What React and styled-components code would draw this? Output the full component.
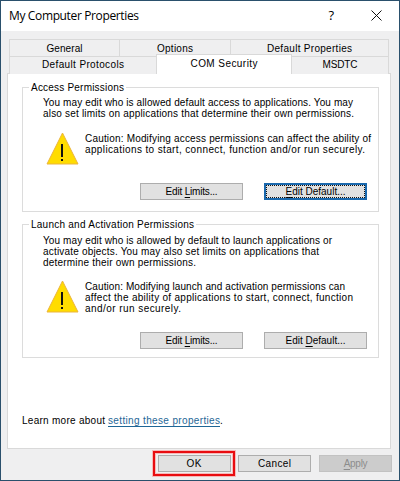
import React, { useLayoutEffect, useRef } from 'react';
import styled, { createGlobalStyle, css } from 'styled-components';

const Global = createGlobalStyle`
  * { box-sizing: border-box; }
  body { margin: 0; background: #fff; }
`;

const Dialog = styled.div`
  width: 400px;
  height: 481px;
  display: flex;
  flex-direction: column;
  background: #efeff0;
  border: 1px solid #2a506c;
  color: #000;
  font: 10px/11px 'Liberation Sans', Arial, sans-serif;
  overflow: hidden;
`;

const TitleBar = styled.header`
  display: flex;
  align-items: center;
  height: 30px;
  flex: none;
  padding: 0 17px 2px 8px;
  background: #fff;
`;

const Title = styled.h1`
  margin: 0;
  flex: 1;
  font: 12px/12px 'Open Sans', 'Noto Sans', sans-serif;
`;

const HelpMark = styled.span`
  font: 13px/16px 'Open Sans', 'Noto Sans', sans-serif;
  margin-right: 37px;
`;

const CloseIcon = styled.svg`
  display: block;
  width: 11px;
  height: 11px;
`;

const TabRow = styled.div`
  display: flex;
  align-items: flex-end;
  width: 380px;
  margin-left: 8px;
  flex: none;
  ${(p) => (p.$front
    ? css`height: 20px; margin-top: -3px; z-index: 1;`
    : css`height: 18px; margin-top: 8px;`)}
`;

const Tab = styled.div`
  width: ${(p) => p.$width}px;
  height: ${(p) => (p.$active ? 20 : 18)}px;
  padding-top: ${(p) => p.$top || 3}px;
  display: flex;
  justify-content: center;
  background: ${(p) => (p.$active ? '#fff' : '#efeff0')};
  border: 1px solid #d9d9d9;
  border-bottom: 0;
  border-left-width: ${(p) => (p.$joined ? 0 : 1)}px;
  border-right-width: ${(p) => (p.$open ? 0 : 1)}px;
`;

const Panel = styled.main`
  width: 384px;
  height: 376px;
  flex: none;
  margin: -1px 0 0 6px;
  padding: 13px 11px 0 14px;
  display: flex;
  flex-direction: column;
  background: #fff;
  border: 1px solid #d9d9d9;
`;

const Group = styled.section`
  width: 357px;
  height: ${(p) => p.$height}px;
  flex: none;
  margin: 0 0 12px;
  display: flex;
  flex-direction: column;
  border: 1px solid #dcdcdc;
`;

const Legend = styled.div`
  width: max-content;
  height: 11px;
  flex: none;
  margin: -6px 0 0 6px;
  padding: 0 2px;
  background: #fff;
`;

const Paragraph = styled.div`
  margin: ${(p) => p.$gap}px 0 0 20px;
  flex: none;
`;

const Caution = styled.div`
  display: flex;
  align-items: flex-start;
  height: 44px;
  flex: none;
  margin: ${(p) => p.$gap}px 0 0 23px;
`;

const WarningIcon = styled.svg`
  width: 33px;
  height: 33px;
  flex: none;
  margin-top: -1px;
`;

const CautionText = styled.div`
  margin-left: 6px;
`;

const ButtonRow = styled.div`
  display: flex;
  justify-content: flex-end;
  gap: 21px;
  margin: auto 11px ${(p) => p.$bottom}px 0;
`;

const PushButton = styled.button`
  width: ${(p) => p.$width || 103}px;
  height: 17px;
  flex: none;
  display: flex;
  justify-content: center;
  padding: 2px 0 0;
  font: inherit;
  color: ${(p) => (p.disabled ? '#8c8c8c' : '#000')};
  background: ${(p) => (p.disabled ? '#cccccc' : '#e1e1e1')};
  border: 1px solid ${(p) => (p.disabled ? '#c2c2c2' : '#adadad')};
  ${(p) => p.$focused && css`
    padding-top: 1px;
    border: 2px solid #1a68ad;
    outline: 1px dotted #111;
    outline-offset: -3px;
  `}
`;

const Key = styled.span`
  text-decoration: underline;
  text-underline-offset: 2px;
  text-decoration-thickness: 1px;
`;

const LearnMore = styled.div`
  display: flex;
  margin: 45px 0 0 0;
`;

const Link = styled.a`
  height: 12px;
  margin-left: 3px;
  color: #1e6696;
  border-bottom: 1px solid #1e6696;
`;

const Footer = styled.footer`
  display: flex;
  align-items: center;
  height: 25px;
  flex: none;
  margin: 2px 0 0 152px;
`;

const Highlight = styled.div`
  display: flex;
  align-items: center;
  justify-content: center;
  width: 82px;
  height: 25px;
  margin-right: 3px;
  border: 2px solid #e80c10;
  box-shadow: 0 0 0 1px #f6b9b9, inset 0 0 0 1px #f6b9b9;
`;

const FooterButtons = styled.div`
  display: flex;
  gap: 8px;
`;

const FitText = styled.span`
  display: block;
  width: ${(p) => p.$width}px;
  height: 11px;
  white-space: nowrap;
`;

// Spreads the letters of one line so that it fills the given width.
function Line({ width, children }) {
  const inner = useRef(null);
  useLayoutEffect(() => {
    const el = inner.current;
    el.style.letterSpacing = '0px';
    const gaps = el.textContent.length - 1;
    const natural = el.getBoundingClientRect().width;
    el.style.letterSpacing = `${(width - natural) / gaps}px`;
  }, [width, children]);
  return <FitText $width={width}><span ref={inner}>{children}</span></FitText>;
}

function Warning() {
  return (
    <WarningIcon viewBox="0 0 33 33" aria-label="Warning">
      <path d="M16.500 1 L32 32 H1 Z" fill="#ffdc00" stroke="#ebb53c" strokeWidth="1" />
      <path d="M15 12 h2 v13 h-2z" fill="#111" />
      <rect x="15" y="27" width="2" height="2" fill="#111" />
    </WarningIcon>
  );
}

function EditLimits() {
  return <PushButton><Line width={52}>Edit <Key>L</Key>imits...</Line></PushButton>;
}

export default function App() {
  return (
    <Dialog>
      <Global />
      <TitleBar>
        <Title><Line width={130}>My Computer Properties</Line></Title>
        <HelpMark>?</HelpMark>
        <CloseIcon viewBox="0 0 11 11"><path d="M.5.5l10 10M10.500.5l-10 10" stroke="#111" fill="none" /></CloseIcon>
      </TitleBar>
      <TabRow>
        <Tab $width={111}><Line width={36}>General</Line></Tab>
        <Tab $width={111} $joined><Line width={36}>Options</Line></Tab>
        <Tab $width={158} $joined><Line width={85}>Default Properties</Line></Tab>
      </TabRow>
      <TabRow $front>
        <Tab $width={147} $top={2} $open><Line width={82}>Default Protocols</Line></Tab>
        <Tab $width={136} $active><Line width={67}>COM Security</Line></Tab>
        <Tab $width={97} $top={2} $joined><Line width={35}>MSDTC</Line></Tab>
      </TabRow>
      <Panel>
        <Group $height={125}>
          <Legend><Line width={93}>Access Permissions</Line></Legend>
          <Paragraph $gap={4}>
            <Line width={310}>You may edit who is allowed default access to applications. You may</Line>
            <Line width={311}>also set limits on applications that determine their own permissions.</Line>
          </Paragraph>
          <Caution $gap={14}>
            <Warning />
            <CautionText>
              <Line width={286}>Caution: Modifying access permissions can affect the ability of</Line>
              <Line width={280}>applications to start, connect, function and/or run securely.</Line>
            </CautionText>
          </Caution>
          <ButtonRow $bottom={11}>
            <EditLimits />
            <PushButton $focused><Line width={60}><Key>E</Key>dit Default...</Line></PushButton>
          </ButtonRow>
        </Group>
        <Group $height={134}>
          <Legend><Line width={163}>Launch and Activation Permissions</Line></Legend>
          <Paragraph $gap={5}>
            <Line width={289}>You may edit who is allowed by default to launch applications or</Line>
            <Line width={276}>activate objects. You may also set limits on applications that</Line>
            <Line width={153}>determine their own permissions.</Line>
          </Paragraph>
          <Caution $gap={13}>
            <Warning />
            <CautionText>
              <Line width={260}>Caution: Modifying launch and activation permissions can</Line>
              <Line width={268}>affect the ability of applications to start, connect, function</Line>
              <Line width={96}>and/or run securely.</Line>
            </CautionText>
          </Caution>
          <ButtonRow $bottom={8}>
            <EditLimits />
            <PushButton><Line width={60}>Edit <Key>D</Key>efault...</Line></PushButton>
          </ButtonRow>
        </Group>
        <LearnMore>
          <Line width={83}>Learn more about</Line>
          <Link><Line width={112}>setting these properties</Line></Link>.
        </LearnMore>
      </Panel>
      <Footer>
        <Highlight><PushButton $width={73}><Line width={15}>OK</Line></PushButton></Highlight>
        <FooterButtons>
          <PushButton $width={73}><Line width={33}>Cancel</Line></PushButton>
          <PushButton $width={73} disabled><Line width={24}><Key>A</Key>pply</Line></PushButton>
        </FooterButtons>
      </Footer>
    </Dialog>
  );
}
